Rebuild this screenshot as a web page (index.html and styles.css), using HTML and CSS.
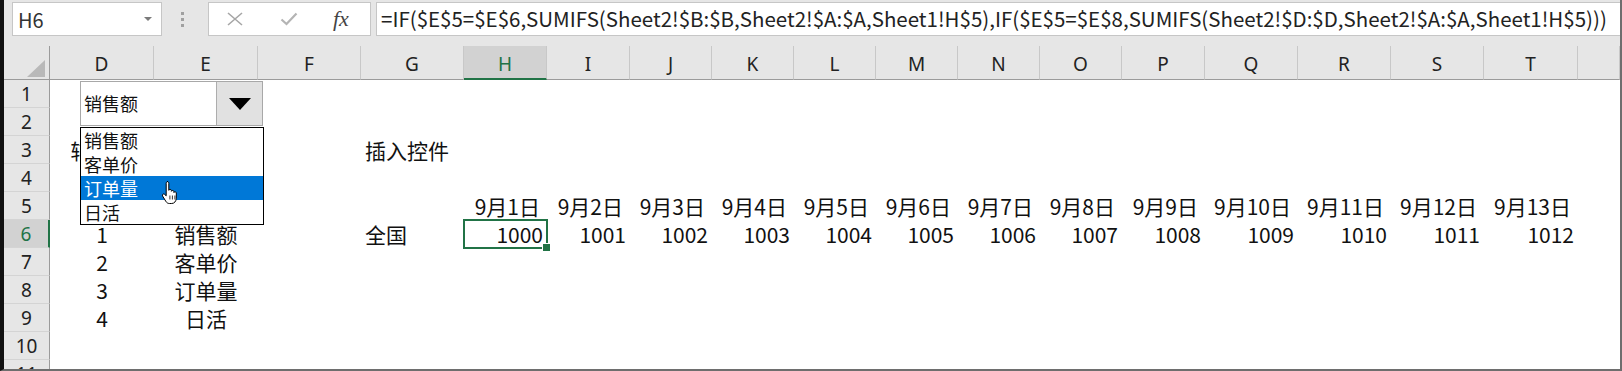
FILE: index.html
```html
<!DOCTYPE html>
<html>
  <head>
    <meta charset="utf-8">
    <meta name="viewport" content="width=device-width,initial-scale=1.0">
    <title>Sheet1</title>
    <link rel="stylesheet" href="styles.css">
  </head>
  <body>
    <div class="window">
      <div class="formula-bar">
        <div class="name-box"><span>H6</span><span class="caret"></span></div>
        <div class="grip"><i></i><i></i><i></i></div>
        <div class="fn-buttons">
          <svg class="icon-x" width="16" height="14" viewBox="0 0 16 14"><path d="M1 1 L15 13 M15 1 L1 13" stroke="#a6a6a6" stroke-width="1.6" fill="none"/></svg>
          <svg class="icon-ok" width="18" height="14" viewBox="0 0 18 14"><path d="M1.5 7.5 L6.5 12 L16.5 1.5" stroke="#b4b4b4" stroke-width="2.2" fill="none"/></svg>
          <span class="fx">fx</span>
        </div>
        <div class="formula">=IF($E$5=$E$6,SUMIFS(Sheet2!$B:$B,Sheet2!$A:$A,Sheet1!H$5),IF($E$5=$E$8,SUMIFS(Sheet2!$D:$D,Sheet2!$A:$A,Sheet1!H$5)))</div>
      </div>

      <div class="sheet">
        <div class="row head">
          <div class="corner"><span class="tri"></span></div>
          <div>D</div><div>E</div><div>F</div><div>G</div>
          <div class="sel">H</div><div>I</div><div>J</div><div>K</div>
          <div>L</div><div>M</div><div>N</div><div>O</div><div>P</div>
          <div>Q</div><div>R</div><div>S</div><div>T</div><div></div>
        </div>
        <div class="row"><div class="rh">1</div></div>
        <div class="row"><div class="rh">2</div></div>
        <div class="row">
          <div class="rh">3</div>
          <div class="c m">辅助列</div><div class="c"></div><div class="c"></div>
          <div class="c">插入控件</div>
        </div>
        <div class="row"><div class="rh">4</div></div>
        <div class="row">
          <div class="rh">5</div>
          <div class="c"></div><div class="c"></div><div class="c"></div><div class="c"></div>
          <div class="c d">9月1日</div><div class="c d">9月2日</div><div class="c d">9月3日</div>
          <div class="c d">9月4日</div><div class="c d">9月5日</div><div class="c d">9月6日</div>
          <div class="c d">9月7日</div><div class="c d">9月8日</div><div class="c d">9月9日</div>
          <div class="c d">9月10日</div><div class="c d">9月11日</div><div class="c d">9月12日</div>
          <div class="c d">9月13日</div>
        </div>
        <div class="row">
          <div class="rh sel">6</div>
          <div class="c m">1</div><div class="c m">销售额</div><div class="c"></div>
          <div class="c">全国</div>
          <div class="c r cur">1000</div><div class="c r">1001</div><div class="c r">1002</div>
          <div class="c r">1003</div><div class="c r">1004</div><div class="c r">1005</div>
          <div class="c r">1006</div><div class="c r">1007</div><div class="c r">1008</div>
          <div class="c r">1009</div><div class="c r">1010</div><div class="c r">1011</div>
          <div class="c r">1012</div>
        </div>
        <div class="row"><div class="rh">7</div><div class="c m">2</div><div class="c m">客单价</div></div>
        <div class="row"><div class="rh">8</div><div class="c m">3</div><div class="c m">订单量</div></div>
        <div class="row"><div class="rh">9</div><div class="c m">4</div><div class="c m">日活</div></div>
        <div class="row"><div class="rh">10</div></div>
        <div class="row"><div class="rh">11</div></div>
      </div>

      <div class="combo">
        <span class="combo-value">销售额</span>
        <span class="combo-btn"><span class="arrow"></span></span>
      </div>
      <ul class="combo-list">
        <li>销售额</li>
        <li>客单价</li>
        <li class="hl">订单量</li>
        <li>日活</li>
      </ul>
      <svg class="hand" width="18" height="24" viewBox="0 0 18 24">
        <path d="M6 1.5c1 0 1.8.8 1.8 1.8v7c.2-1.2 2.6-1.2 2.6.2v.8c.3-1.1 2.5-1.1 2.5.3v.9c.3-1 2.4-1 2.4.4v5.3c0 3-2 5.3-4.6 5.3H8.4c-1.6 0-2.7-.8-3.6-2.2L1.6 16c-.7-1.2.5-2.6 1.8-1.8l1.8 1.6V3.3c0-1 .8-1.8 1.8-1.8z" fill="#fff" stroke="#000" stroke-width="1"/>
        <path d="M8.9 15.5v4M11.4 15.5v4M13.9 15.5v4" stroke="#000" stroke-width=".8"/>
      </svg>
    </div>
  </body>
</html>
```

FILE: styles.css
```css
* {
  box-sizing: border-box;
}
body {
  margin: 0;
  background: #fff;
  font-family: "Noto Sans CJK SC", sans-serif;
  overflow: hidden;
}
.window {
  position: relative;
  width: 1622px;
  height: 371px;
  border-left: 4px solid #111;
  border-right: 2px solid #6e6e6e;
  border-bottom: 2px solid #6e6e6e;
  background: #e6e6e6;
  display: flex;
  flex-direction: column;
  overflow: hidden;
}

/* formula bar */
.formula-bar {
  flex: none;
  height: 46px;
  display: flex;
  align-items: flex-start;
  padding: 2px 0 0 8px;
}
.name-box {
  width: 150px;
  height: 34px;
  background: #fff;
  border: 1px solid #c6c6c6;
  display: flex;
  align-items: center;
  justify-content: space-between;
  padding: 0 9px 0 5px;
  font-size: 20px;
  color: #333;
}
.caret {
  border-left: 4px solid transparent;
  border-right: 4px solid transparent;
  border-top: 4px solid #7a7a7a;
}
.grip {
  width: 46px;
  height: 34px;
  display: flex;
  flex-direction: column;
  align-items: center;
  justify-content: center;
  gap: 3px;
  padding-right: 5px;
}
.grip i {
  width: 3px;
  height: 3px;
  background: #a0a0a0;
}
.fn-buttons {
  width: 163px;
  height: 34px;
  background: #fff;
  border: 1px solid #c6c6c6;
  display: flex;
  align-items: center;
  padding-left: 18px;
}
.icon-ok {
  margin-left: 37px;
}
.fx {
  margin-left: 35px;
  font-family: "Liberation Serif", serif;
  font-style: italic;
  font-size: 22px;
  color: #444;
  line-height: 1;
}
.formula {
  flex: 1;
  min-width: 0;
  height: 34px;
  margin-left: 5px;
  background: #fff;
  border: 1px solid #c6c6c6;
  border-right: none;
  padding-left: 4px;
  font-size: 20.5px;
  line-height: 31px;
  color: #222;
  white-space: nowrap;
  overflow: hidden;
}

/* sheet grid */
.sheet {
  flex: 1;
  min-height: 0;
  background: #fff;
  overflow: hidden;
}
.row {
  display: grid;
  grid-template-columns: 46px 104px 104px 103px 103px 83px 83px 82px 82px 82px 82px 82px 82px 83px 93px 93px 93px 94px 1fr;
  height: 28px;
}
.head {
  height: 34px;
  background: #e6e6e6;
}
.head > div {
  border-right: 1px solid #c8c8c8;
  border-bottom: 1px solid #9b9b9b;
  display: flex;
  align-items: center;
  justify-content: center;
  padding-top: 3px;
  font-family: "Noto Sans", sans-serif;
  font-size: 19px;
  color: #222;
}
.head > .corner {
  border-right-color: #9b9b9b;
  align-items: flex-end;
  justify-content: flex-end;
  padding: 0 4px 2px 0;
}
.tri {
  width: 18px;
  height: 17px;
  background: #b9b9b9;
  clip-path: polygon(100% 0, 100% 100%, 0 100%);
}
.head > .sel {
  background: #d2d2d2;
  color: #217346;
  border-bottom: 2px solid #217346;
}
.rh {
  background: #e6e6e6;
  border-right: 1px solid #9b9b9b;
  border-bottom: 1px solid #d4d4d4;
  display: flex;
  align-items: center;
  justify-content: center;
  font-family: "Noto Sans", sans-serif;
  font-size: 19px;
  color: #222;
}
.rh.sel {
  background: #d2d2d2;
  color: #217346;
  border-right: 2px solid #217346;
}
.c {
  padding: 0 4px;
  font-size: 21px;
  line-height: 28px;
  color: #111;
  white-space: nowrap;
}
.c.m {
  text-align: center;
}
.c.r {
  text-align: right;
}
.c.d {
  text-align: right;
  padding-right: 7px;
}
.cur {
  position: relative;
  outline: 2px solid #217346;
  outline-offset: -1px;
}
.cur::after {
  content: "";
  position: absolute;
  right: -4px;
  bottom: -4px;
  width: 7px;
  height: 7px;
  background: #217346;
  border: 1px solid #fff;
}

/* form control dropdown */
.combo {
  position: absolute;
  left: 76px;
  top: 81px;
  width: 183px;
  height: 45px;
  background: #fff;
  border: 1px solid #a8a8a8;
  display: flex;
}
.combo-value {
  flex: 1;
  padding-left: 3px;
  font-size: 18px;
  line-height: 43px;
  color: #111;
}
.combo-btn {
  width: 46px;
  background: #e1e1e1;
  border-left: 1px solid #adadad;
  display: flex;
  align-items: center;
  justify-content: center;
}
.arrow {
  border-left: 11px solid transparent;
  border-right: 11px solid transparent;
  border-top: 12px solid #000;
}
.combo-list {
  position: absolute;
  left: 76px;
  top: 127px;
  width: 184px;
  margin: 0;
  padding: 0;
  list-style: none;
  background: #fff;
  border: 1px solid #000;
}
.combo-list li {
  height: 24px;
  padding-left: 3px;
  font-size: 18px;
  line-height: 24px;
  color: #111;
}
.combo-list li.hl {
  background: #0078d7;
  color: #fff;
}
.hand {
  position: absolute;
  left: 157px;
  top: 180px;
}
```
